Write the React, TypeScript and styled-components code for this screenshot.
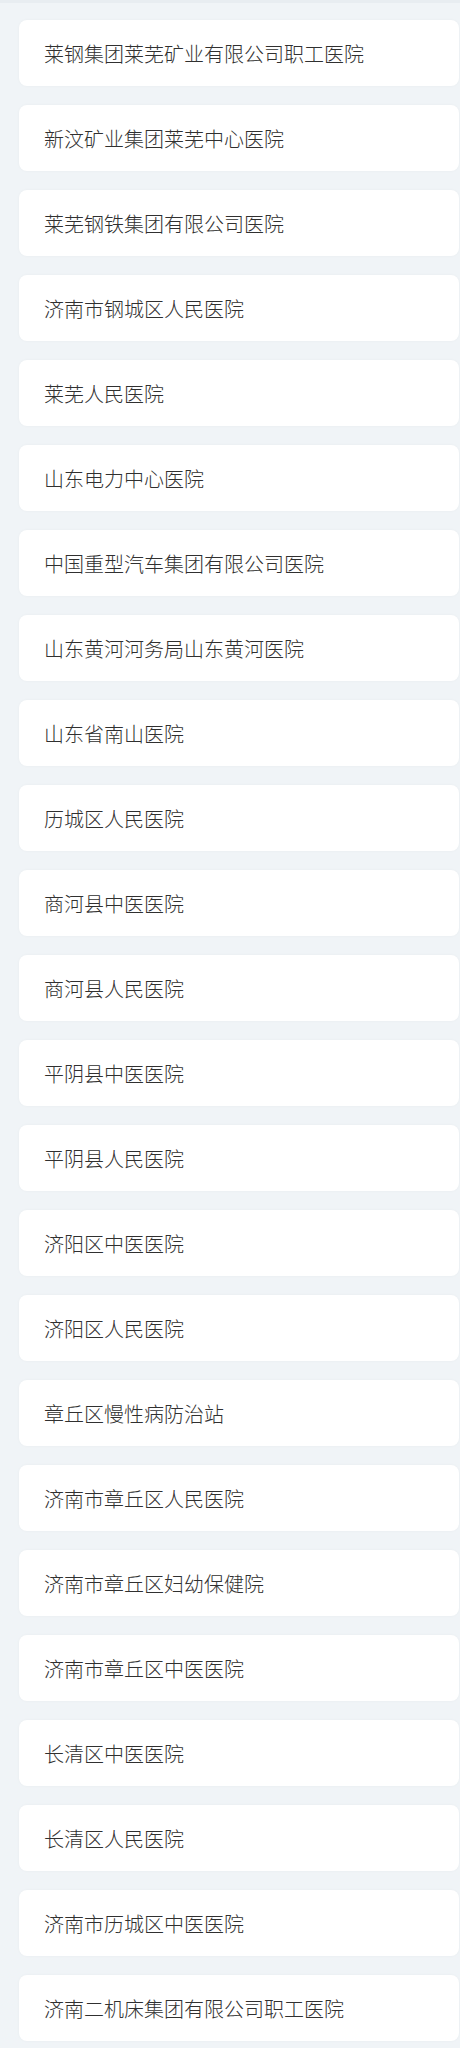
import React from "react";
import styled, { createGlobalStyle } from "styled-components";

const Global = createGlobalStyle`
  html, body {
    margin: 0;
    padding: 0;
    background: #f0f4f7;
  }
  body {
    font-family: "Noto Sans CJK SC", "Noto Sans", sans-serif;
  }
`;

const Page = styled.div`
  width: 460px;
  min-height: 2048px;
  background: #f0f4f7;
`;

const TopStrip = styled.div`
  height: 3px;
  background: #e8edf1;
`;

const List = styled.ul`
  list-style: none;
  margin: 0;
  padding: 17px 1px 0 19px;
  display: flex;
  flex-direction: column;
  gap: 19px;
`;

const Card = styled.li`
  height: 66px;
  box-sizing: border-box;
  background: #ffffff;
  border-radius: 8px;
  box-shadow: 0 0 3px rgba(0, 0, 0, 0.04);
  display: flex;
  align-items: center;
  padding-left: 25px;
  font-size: 20px;
  font-weight: 300;
  color: #303030;
  white-space: nowrap;
`;

const hospitals = [
  "莱钢集团莱芜矿业有限公司职工医院",
  "新汶矿业集团莱芜中心医院",
  "莱芜钢铁集团有限公司医院",
  "济南市钢城区人民医院",
  "莱芜人民医院",
  "山东电力中心医院",
  "中国重型汽车集团有限公司医院",
  "山东黄河河务局山东黄河医院",
  "山东省南山医院",
  "历城区人民医院",
  "商河县中医医院",
  "商河县人民医院",
  "平阴县中医医院",
  "平阴县人民医院",
  "济阳区中医医院",
  "济阳区人民医院",
  "章丘区慢性病防治站",
  "济南市章丘区人民医院",
  "济南市章丘区妇幼保健院",
  "济南市章丘区中医医院",
  "长清区中医医院",
  "长清区人民医院",
  "济南市历城区中医医院",
  "济南二机床集团有限公司职工医院",
];

export default function App() {
  return (
    <Page>
      <Global />
      <TopStrip />
      <List>
        {hospitals.map((h) => (
          <Card key={h}>{h}</Card>
        ))}
      </List>
    </Page>
  );
}
